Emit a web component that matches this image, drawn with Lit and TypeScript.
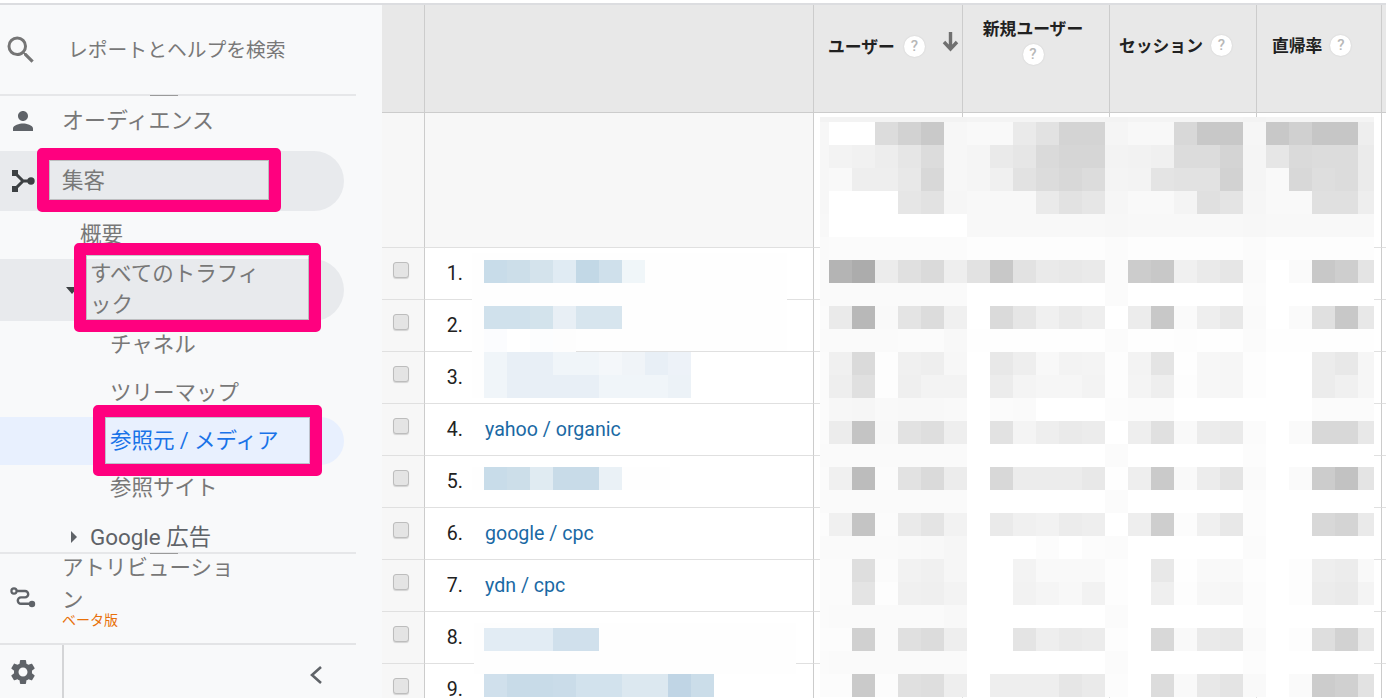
import { LitElement, html, css } from "lit";
import { customElement } from "lit/decorators.js";

const MOSAIC = `
f3 f3 f3 f3 f3 f3 f3 f4 f4 f4 f4 f4 f4 f3 f4 f4 f4 f4 f4 f3 f4 f4 f4 f4 f4
f7 ff ff dc d2 c9 f7 f9 f9 ea e2 d4 d4 f5 f8 f8 d8 c8 c8 f6 c8 d0 c6 c6 ee
f7 f3 f1 ed e6 dc f7 f5 ea e6 da d6 d6 f3 f2 f0 dc dc d4 f5 e6 da dc dc eb
f7 f9 ee ee e8 d8 f7 f5 f0 e2 dc d8 dc f4 f3 e4 e2 e2 d2 f5 f9 d8 de dc eb
f7 ff ff ff e6 e2 f6 f8 f8 f8 ea e2 e6 f6 f9 f9 f4 e0 e4 f6 f9 f9 e0 e0 ee
f8 ff ff ff ff ff ff f8 f8 f8 f8 f8 f8 f7 f8 f8 f8 f8 f8 f7 f8 f8 f8 f8 f8
fa fb fb fb fb fb fb fd fd fd fd fd fd fb fd fd fd fd fd fb fd fd fd fd fd
fa b4 ac ec e0 da ee e2 c8 e2 ea e8 ea fb cc c8 f0 ea e6 fa ff fa c8 ce e4
fa fa fa fa fa fa fa ff ff ff ff ff ff fb ff ff ff ff ff fb ff ff ff ff ff
fb ea b8 f9 e4 dc f0 ff da e6 f0 ea ee ff ec c8 fa ee e8 fa ff fa e0 c8 e8
fa fa fa fa fb fb f8 fe fe fe fe fe fe fb fe fe fd fe fe fb fe fe fe fe fe
fb f0 da fd f0 ee f7 ff e8 ee f8 f3 f4 fd f3 e4 fe f7 f6 fd ff ff ec e8 f6
fb ee e0 fd ef f3 f3 ff ec f4 f6 f6 f3 fd f4 ee fd f7 f6 fd ff ff ec f0 f6
fb f7 f6 f9 f8 f8 f9 ff fb fa ff ff ff fc fb fb ff ff ff ff ff ff fb fb fb
fb ec c4 f8 e2 de ee ff e2 f4 ee ea ec ff ee e0 f9 ec ea fb ff fa d8 d8 e8
fa fa fa fa fa fa fa ff ff ff ff ff ff fb ff ff ff ff ff fc ff ff ff ff ff
fb f0 bc fb e2 da ec ff d8 ec ec ec e8 fe ee ca f9 ec e4 fa ff fa cc c2 e4
fa fa fa fa fa fa fa ff ff ff ff ff ff fb ff ff ff ff ff fc ff ff ff ff ff
fc f0 c4 fb ea e4 f2 ff ea f0 f2 ec ee ff ee ce fc f0 e8 fc ff ff d8 d4 ea
fa fa fa fa f9 f8 f6 ff ff ff fc ff fc fb ff ff ff ff ff fb ff ff ff ff ff
fb fb de fb f2 f0 f6 ff ff f3 f9 f9 f9 fd ff e8 fe f9 f9 fd ff fd ee ec f9
fb fb e4 fd f0 ef f3 ff ff f2 f5 f8 f2 fd ff ef fd f7 f6 fc ff fd ec ea f4
fb fa fa fa fa fa f8 ff ff ff ff ff ff fb ff ff ff ff ff fc ff ff ff ff ff
fc fc d0 fa e0 dc ee ff ff e4 ee ea ec fd ff d8 f9 ea e8 fa ff fd de d2 e8
fb fa fa fa fa fa fa ff ff ff ff ff ff fb ff ff ff ff ff fc ff ff ff ff ff
fc fc ca fc e0 de ee ff ee ee ee e6 ea fc ff dc f9 e8 e4 f9 ff fa cc d0 e2`
  .trim()
  .split("\n")
  .map((r) => r.trim().split(" "));

const MASKS = [
  { x: 472, y: 253, w: 315, h: 98 },
  { x: 472, y: 351, w: 12, h: 47 },
  { x: 472, y: 467, w: 198, h: 23 },
  { x: 474, y: 623, w: 322, h: 51 },
];

const TILES = [
  { y: 260, c: ["c8dce9", "ccdee9", "d4e3ec", "e0ebf3", "c2d8e6", "cfe0eb", "f0f6f9"] },
  { y: 306, c: ["d0e1ec", "d0e1ec", "d3e3ec", "e8eff5", "d7e5ee", "d7e5ee"] },
  { y: 329, c: ["fbfcfe", "ffffff", "fcfdfe", "fdfdfd"] },
  { y: 352, c: ["f0f5f9", "e8eff6", "e8eff6", "f0f5f9", "f0f5f9", "f4f7fa", "f0f4f8", "e8eff6", "edf2f8"] },
  { y: 375, c: ["f0f5f9", "e8eff6", "e8eff6", "e8eff6", "e8eff6", "f0f5f9", "f0f5f9", "f0f5f9", "ecf2f7"] },
  { y: 467, c: ["c8dce9", "ccdee9", "e0ebf2", "c8dbe8", "c8dbe8", "eaf1f6"] },
  { y: 628, c: ["e2ecf4", "e2ecf4", "e2ecf4", "d0e0ec", "d0e0ec"] },
  { y: 674, c: ["d0e0ec", "c8dbe8", "c8dbe8", "cadce9", "d2e2ed", "d2e2ed", "dce8f0", "dce8f0", "c0d5e5", "cbdde9"] },
];

const ROWS: { n: number; link?: string }[] = [
  { n: 1 },
  { n: 2 },
  { n: 3 },
  { n: 4, link: "yahoo / organic" },
  { n: 5 },
  { n: 6, link: "google / cpc" },
  { n: 7, link: "ydn / cpc" },
  { n: 8 },
  { n: 9 },
];

const help = html`<span class="help">?</span>`;

@customElement("app-root")
export class AppRoot extends LitElement {
  static styles = css`
    :host {
      display: block;
      width: 1386px;
      height: 698px;
      overflow: hidden;
      background: #fff;
      font-family: "Roboto", "Noto Sans CJK JP", sans-serif;
    }
    .page {
      position: relative;
      width: 1386px;
      height: 698px;
      overflow: hidden;
      box-sizing: border-box;
      padding-top: 3px;
    }
    .topline {
      height: 2px;
      background: #dcdde0;
    }
    .body {
      display: flex;
      height: 693px;
    }
    /* sidebar */
    .side {
      width: 382px;
      flex: none;
      background: #f8f9fa;
      display: flex;
      flex-direction: column;
      color: #787878;
      font-size: 21.5px;
      font-family: "Roboto", "Noto Sans CJK JP", sans-serif;
    }
    .search {
      height: 89px;
      display: flex;
      align-items: center;
      font-size: 19.8px;
      width: 356px;
      flex: none;
    }
    .search svg {
      width: 36px;
      height: 36px;
      margin-left: 3px;
      margin-right: 29px;
      fill: #757575;
      flex: none;
    }
    .search span {
      padding-bottom: 2px;
    }
    .rule {
      flex: none;
      width: 356px;
      height: 2px;
      background: #e6e7e9;
      position: relative;
    }
    .rule::after {
      content: "";
      position: absolute;
      left: 150px;
      top: 1px;
      width: 28px;
      height: 1px;
      background: #9a9a9a;
    }
    .nav {
      height: 456px;
      flex: none;
      overflow: hidden;
      display: flex;
      flex-direction: column;
    }
    .item {
      display: flex;
      align-items: center;
      flex: none;
      line-height: 31px;
      box-sizing: border-box;
      padding-bottom: 2px;
    }
    .top {
      padding-left: 62px;
      position: relative;
    }
    .top svg {
      position: absolute;
      left: 8px;
      top: 50%;
      width: 30px;
      height: 30px;
      margin-top: -15px;
      fill: #5f6368;
    }
    .aud {
      height: 55px;
      padding-bottom: 6px;
      font-size: 22px;
    }
    .top.aud svg {
      top: 25px;
    }
    .pill {
      background: #e8eaed;
      width: 344px;
      border-radius: 0 31px 31px 0;
    }
    .acq {
      height: 60px;
    }
    .ov {
      height: 48px;
      padding-left: 80px;
    }
    .all {
      height: 62px;
      padding-left: 66px;
    }
    .caret {
      width: 0;
      height: 0;
      border-left: 6px solid transparent;
      border-right: 6px solid transparent;
      border-top: 7px solid #3c4043;
      margin: 2px 12px 0 0;
    }
    .sub {
      padding-left: 110px;
    }
    .h47 {
      height: 47px;
      padding-bottom: 0;
    }
    .h49 {
      height: 49px;
      padding-bottom: 1px;
    }
    .h46 {
      height: 46px;
    }
    .active {
      background: #e8f0fe;
      color: #1a73e8;
      height: 48px;
    }
    .ads {
      height: 50px;
      padding: 2px 0 0 71px;
      color: #5f6368;
      font-size: 22.4px;
    }
    .tri {
      width: 0;
      height: 0;
      border-top: 6px solid transparent;
      border-bottom: 6px solid transparent;
      border-left: 6px solid #5f6368;
      margin-right: 13px;
    }
    .attr {
      height: 89px;
      flex: none;
      display: flex;
      align-items: flex-start;
      padding-left: 62px;
      position: relative;
      line-height: 32px;
      box-sizing: border-box;
    }
    .attr > div {
      margin-top: -2px;
    }
    .attr svg {
      position: absolute;
      left: 8px;
      top: 28px;
      width: 30px;
      height: 30px;
      fill: none;
      stroke: #5f6368;
    }
    .beta {
      display: block;
      font-size: 14px;
      line-height: 16px;
      color: #e8710a;
      margin-top: -4px;
    }
    .foot {
      flex: 1;
      display: flex;
      border-top: 2px solid #e3e4e6;
      width: 356px;
      position: relative;
    }
    .gear {
      width: 64px;
      flex: none;
      display: flex;
      align-items: center;
      justify-content: center;
      border-right: 2px solid #d4d5d7;
      padding-right: 16px;
      box-sizing: border-box;
    }
    .gear svg {
      width: 30px;
      height: 30px;
      fill: #5f6368;
      margin-top: 1px;
    }
    .chev {
      position: absolute;
      left: 306px;
      top: 17px;
      width: 22px;
      height: 26px;
      fill: none;
      stroke: #5f6368;
      stroke-width: 2.6;
    }
    /* table */
    .table {
      flex: 1;
      display: grid;
      grid-template-columns: 43px 389px 149px 147px 147px 125px 4px;
      grid-auto-rows: 52px;
      grid-template-rows: 108px 135px;
      font-size: 19.6px;
      color: #212121;
    }
    .hd {
      background: #e8e8e8;
      border-right: 1px solid #ccc;
      border-bottom: 1px solid #ccc;
      box-sizing: border-box;
      font-size: 16.8px;
      font-weight: 700;
      color: #212121;
      font-family: "Noto Sans CJK JP", sans-serif;
      position: relative;
    }
    .hd.flat {
      border-right: 0;
    }
    .hdrow {
      display: flex;
      align-items: center;
      height: 80px;
    }
    .u {
      padding-left: 14px;
      padding-top: 1px;
    }
    .u .help {
      margin-left: 9px;
    }
    .arrow {
      position: absolute;
      left: 128px;
      top: 27px;
      width: 17px;
      height: 20px;
      fill: none;
      stroke: #707070;
      stroke-width: 3.4;
    }
    .n {
      display: flex;
      flex-direction: column;
      align-items: center;
      padding: 10px 6px 0 0;
      gap: 3px;
      line-height: 26px;
    }
    .s {
      padding-left: 9px;
    }
    .s .help {
      margin-left: 8px;
    }
    .r {
      padding-left: 15px;
    }
    .r .help {
      margin-left: 8px;
    }
    .help {
      width: 21px;
      height: 21px;
      flex: none;
      border-radius: 50%;
      background: #fff;
      box-shadow: 0 0 2px rgba(0, 0, 0, 0.12);
      color: #b8b8b8;
      font: 500 15px/21px "Roboto", sans-serif;
      text-align: center;
      display: block;
    }
    .sum {
      background: #f7f7f7;
      border-right: 1px solid #ccc;
      border-bottom: 1px solid #e0e0e0;
      box-sizing: border-box;
    }
    .sum.v {
      background: #fff;
    }
    .sum.flat {
      border-right: 0;
    }
    .check {
      background: #f7f7f7;
      border-right: 1px solid #ccc;
      border-bottom: 1px solid #e0e0e0;
      box-sizing: border-box;
      padding: 14px 0 0 11px;
    }
    .box {
      display: block;
      width: 16px;
      height: 16px;
      box-sizing: border-box;
      background: #e4e4e4;
      border: 1px solid #bdbdbd;
      border-radius: 3px;
      box-shadow: 0 1px 1px rgba(0, 0, 0, 0.15);
    }
    .dim {
      background: #fff;
      border-right: 1px solid #ccc;
      border-bottom: 1px solid #e0e0e0;
      box-sizing: border-box;
      display: flex;
      align-items: center;
      line-height: 24px;
    }
    .rank {
      width: 38px;
      text-align: right;
      flex: none;
    }
    .dim a {
      margin-left: 22px;
      color: #1a69a4;
      text-decoration: none;
    }
    .val {
      background: #fff;
      border-right: 1px solid #e0e0e0;
      border-bottom: 1px solid #e0e0e0;
      box-sizing: border-box;
    }
    .val.end {
      border-right-color: #ccc;
    }
    .val.flat {
      border-right: 0;
    }
    /* redaction mosaic: lies over the table */
    .mosaic {
      position: absolute;
      left: 820px;
      top: 117px;
      display: grid;
      grid-template-columns: 9px repeat(23, 23px) 16px;
      grid-template-rows: 5px repeat(25, 23px);
    }
    .mask {
      position: absolute;
      background: #fefefe;
    }
    .tiles {
      position: absolute;
      left: 484px;
      display: flex;
      height: 23px;
    }
    .tiles i {
      display: block;
      width: 23px;
      height: 23px;
    }
    /* annotation frames */
    .frame {
      position: absolute;
      box-sizing: border-box;
      border: 12px solid #ff007f;
      border-radius: 5px;
      box-shadow: inset 0 0 0 1px rgba(90, 90, 90, 0.3);
    }
    .f1 {
      left: 37px;
      top: 148px;
      width: 244px;
      height: 64px;
    }
    .f2 {
      left: 74px;
      top: 243px;
      width: 247px;
      height: 89px;
    }
    .f3 {
      left: 93px;
      top: 405px;
      width: 229px;
      height: 71px;
    }
  `;

  render() {
    return html`<div class="page">
      <div class="topline"></div>
      <div class="body">
        <aside class="side">
          <div class="search">
            <svg viewBox="0 0 24 24">
              <path
                d="M15.5 14h-.79l-.28-.27A6.47 6.47 0 0 0 16 9.5 6.5 6.5 0 1 0 9.5 16c1.61 0 3.09-.59 4.23-1.57l.27.28v.79l5 4.99L20.49 19l-4.99-5zm-6 0C7.01 14 5 11.99 5 9.5S7.01 5 9.5 5 14 7.01 14 9.5 11.99 14 9.5 14z"
              />
            </svg>
            <span>レポートとヘルプを検索</span>
          </div>
          <div class="rule"></div>
          <nav class="nav">
            <div class="item top aud">
              <svg viewBox="0 0 24 24">
                <path
                  d="M12 12c2.21 0 4-1.79 4-4s-1.79-4-4-4-4 1.79-4 4 1.79 4 4 4zm0 2c-2.67 0-8 1.34-8 4v2h16v-2c0-2.66-5.33-4-8-4z"
                />
              </svg>
              オーディエンス
            </div>
            <div class="item top pill acq">
              <svg viewBox="0 0 30 30">
                <rect x="4" y="4" width="6" height="6" fill="#3c4043" />
                <rect x="4" y="20" width="6" height="6" fill="#3c4043" />
                <circle cx="23" cy="15" r="3.7" fill="#3c4043" />
                <path d="M8 8l7 7-7 7M15 15h6" fill="none" stroke="#3c4043" stroke-width="3" />
              </svg>
              集客
            </div>
            <div class="item ov">概要</div>
            <div class="item pill all">
              <span class="caret"></span><span>すべてのトラフィ<br />ック</span>
            </div>
            <div class="item sub h47">チャネル</div>
            <div class="item sub h49">ツリーマップ</div>
            <div class="item sub pill active">参照元 / メディア</div>
            <div class="item sub h46">参照サイト</div>
            <div class="item ads"><span class="tri"></span>Google 広告</div>
          </nav>
          <div class="rule"></div>
          <div class="attr">
            <svg viewBox="0 0 30 30">
              <circle cx="6" cy="9" r="2.6" stroke-width="2.2" />
              <path d="M9 9h8a3.2 3.2 0 0 1 0 6.4h-4a3.2 3.2 0 0 0 0 6.4h8" stroke-width="2.4" />
              <circle cx="24" cy="22" r="3.2" fill="#5f6368" stroke="none" />
            </svg>
            <div>
              アトリビューショ<br />ン
              <span class="beta">ベータ版</span>
            </div>
          </div>
          <div class="foot">
            <div class="gear">
              <svg viewBox="0 0 24 24">
                <path
                  d="M19.14 12.94c.04-.3.06-.61.06-.94 0-.32-.02-.64-.07-.94l2.03-1.58c.18-.14.23-.41.12-.61l-1.92-3.32c-.12-.22-.37-.29-.59-.22l-2.39.96c-.5-.38-1.03-.7-1.62-.94l-.36-2.54c-.04-.24-.24-.41-.48-.41h-3.84c-.24 0-.43.17-.47.41l-.36 2.54c-.59.24-1.13.57-1.62.94l-2.39-.96c-.22-.08-.47 0-.59.22L2.74 8.87c-.12.21-.08.47.12.61l2.03 1.58c-.05.3-.09.63-.09.94s.02.64.07.94l-2.03 1.58c-.18.14-.23.41-.12.61l1.92 3.32c.12.22.37.29.59.22l2.39-.96c.5.38 1.03.7 1.62.94l.36 2.54c.05.24.24.41.48.41h3.84c.24 0 .44-.17.47-.41l.36-2.54c.59-.24 1.13-.56 1.62-.94l2.39.96c.22.08.47 0 .59-.22l1.92-3.32c.12-.22.07-.47-.12-.61l-2.01-1.58zM12 15.6c-1.98 0-3.6-1.62-3.6-3.6s1.62-3.6 3.6-3.6 3.6 1.62 3.6 3.6-1.62 3.6-3.6 3.6z"
                />
              </svg>
            </div>
            <svg class="chev" viewBox="0 0 22 26"><path d="M15 5l-9 8 9 8" /></svg>
          </div>
        </aside>
        <section class="table">
          <div class="hd"></div>
          <div class="hd"></div>
          <div class="hd">
            <div class="hdrow u">ユーザー ${help}</div>
            <svg class="arrow" viewBox="0 0 17 20"><path d="M8.5 0v17M2 10l6.5 7 6.5-7" /></svg>
          </div>
          <div class="hd"><div class="n">新規ユーザー ${help}</div></div>
          <div class="hd"><div class="hdrow s">セッション ${help}</div></div>
          <div class="hd"><div class="hdrow r">直帰率 ${help}</div></div>
          <div class="hd flat"></div>

          <div class="sum"></div>
          <div class="sum"></div>
          <div class="sum v"></div>
          <div class="sum v"></div>
          <div class="sum v"></div>
          <div class="sum v"></div>
          <div class="sum v flat"></div>

          ${ROWS.map(
            (r) => html`<div class="check"><span class="box"></span></div>
              <div class="dim">
                <span class="rank">${r.n}.</span>
                ${r.link ? html`<a href="#">${r.link}</a>` : ""}
              </div>
              <div class="val"></div>
              <div class="val"></div>
              <div class="val"></div>
              <div class="val end"></div>
              <div class="val flat"></div>`
          )}
        </section>
      </div>

      ${MASKS.map(
        (m) =>
          html`<div
            class="mask"
            style="left:${m.x}px;top:${m.y}px;width:${m.w}px;height:${m.h}px"
          ></div>`
      )}
      ${TILES.map(
        (t) => html`<div class="tiles" style="top:${t.y}px">
          ${t.c.map((c) => html`<i style="background:#${c}"></i>`)}
        </div>`
      )}
      <div class="mosaic">
        ${MOSAIC.flat().map((g) => html`<i style="background:#${g}${g}${g}"></i>`)}
      </div>

      <div class="frame f1"></div>
      <div class="frame f2"></div>
      <div class="frame f3"></div>
    </div>`;
  }
}
